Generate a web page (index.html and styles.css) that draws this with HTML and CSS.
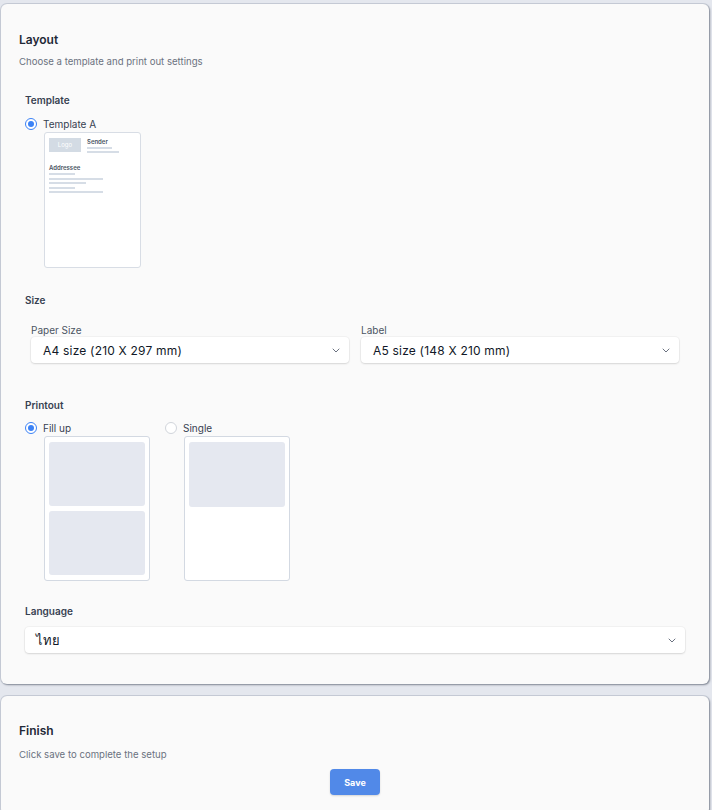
FILE: index.html
```html
<!DOCTYPE html>
<html lang="en">
<head>
<meta charset="UTF-8" />
<meta name="viewport" content="width=device-width, initial-scale=1" />
<title>Setup</title>
<link rel="stylesheet" href="styles.css">
</head>
<body>

<div class="card" id="layoutCard">
  <h2 class="cardTitle">Layout</h2>
  <p class="cardSub">Choose a template and print out settings</p>

  <div class="section sectionTemplate">
    <div class="sectionLabel">Template</div>
    <label class="radioRow">
      <span class="radio checked"></span>
      Template A
    </label>
    <div class="templatePreview">
      <div class="tplHead">
        <div class="tplLogo">Logo</div>
        <div class="tplSender">
          <div class="tplText">Sender</div>
          <div class="tplLine w25"></div>
          <div class="tplLine w32"></div>
        </div>
      </div>
      <div class="tplText tplAddr">Addressee</div>
      <div class="tplLines">
        <div class="tplLine w26"></div>
        <div class="tplLine w54"></div>
        <div class="tplLine w37"></div>
        <div class="tplLine w26"></div>
        <div class="tplLine w54"></div>
      </div>
    </div>
  </div>

  <div class="section sectionSize">
    <div class="sectionLabel">Size</div>
    <div class="sizeGrid">
      <div class="field">
        <div class="fieldLabel">Paper Size</div>
        <div class="select">
          <span>A4 size (210 X 297 mm)</span>
          <svg class="chevron" width="8" height="5" viewBox="0 0 8 5"><path d="M1 1l3 3 3-3" fill="none" stroke="#6b7280" stroke-width="1" stroke-linecap="round" stroke-linejoin="round"/></svg>
        </div>
      </div>
      <div class="field">
        <div class="fieldLabel">Label</div>
        <div class="select">
          <span>A5 size (148 X 210 mm)</span>
          <svg class="chevron" width="8" height="5" viewBox="0 0 8 5"><path d="M1 1l3 3 3-3" fill="none" stroke="#6b7280" stroke-width="1" stroke-linecap="round" stroke-linejoin="round"/></svg>
        </div>
      </div>
    </div>
  </div>

  <div class="section sectionPrintout">
    <div class="sectionLabel">Printout</div>
    <div class="printOptions">
      <div class="printOption">
        <label class="radioRow">
          <span class="radio checked"></span>
          Fill up
        </label>
        <div class="sheet">
          <div class="sheetBlock"></div>
          <div class="sheetBlock"></div>
        </div>
      </div>
      <div class="printOption">
        <label class="radioRow">
          <span class="radio"></span>
          Single
        </label>
        <div class="sheet">
          <div class="sheetBlock"></div>
        </div>
      </div>
    </div>
  </div>

  <div class="section sectionLang">
    <div class="sectionLabel">Language</div>
    <div class="select langSelect">
      <span>ไทย</span>
      <svg class="chevron" width="8" height="5" viewBox="0 0 8 5"><path d="M1 1l3 3 3-3" fill="none" stroke="#6b7280" stroke-width="1" stroke-linecap="round" stroke-linejoin="round"/></svg>
    </div>
  </div>
</div>

<div class="card" id="finishCard">
  <h2 class="cardTitle">Finish</h2>
  <p class="cardSub">Click save to complete the setup</p>
  <div class="actions">
    <button class="saveBtn">Save</button>
  </div>
</div>

</body>
</html>
```

FILE: styles.css
```css
body {
  margin: 0;
  padding: 4px 3px 0 1px;
  background: #e4e7ee;
  font-family: Inter, "Noto Sans", "DejaVu Sans", sans-serif;
  color: #1f2937;
}

.card {
  background: #fafafa;
  border-radius: 6px;
  box-shadow: 0 0 0 1px rgba(120,130,150,0.25), 1px 1px 2px rgba(60,66,80,0.55);
  padding: 28px 18px 31px 18px;
}
#finishCard {
  margin-top: 12px;
  padding-top: 27px;
  padding-bottom: 20px;
}

.cardTitle {
  margin: 0;
  font-size: 12px;
  line-height: 16px;
  font-weight: 600;
  color: #1f2937;
}
.cardSub {
  margin: 8px 0 0;
  font-size: 9.6px;
  line-height: 12px;
  color: #6b7280;
}
#finishCard .cardSub { margin-top: 10px; }

.section {
  padding: 0 6px;
}
.sectionLabel {
  font-size: 10px;
  line-height: 14px;
  font-weight: 600;
  color: #374151;
}
.sectionTemplate { margin-top: 25px; }
.sectionSize { margin-top: 25px; }
.sectionPrintout { margin-top: 35px; }
.sectionLang { margin-top: 23px; }

/* radios */
.radioRow {
  display: flex;
  align-items: center;
  gap: 6px;
  height: 14px;
  font-size: 10px;
  color: #374151;
}
.radio {
  box-sizing: border-box;
  width: 12px;
  height: 12px;
  border-radius: 50%;
  border: 1px solid #d1d5db;
  background: #fff;
  display: flex;
  align-items: center;
  justify-content: center;
}
.radio.checked {
  border: 1.5px solid #3b82f6;
}
.radio.checked::after {
  content: "";
  width: 6px;
  height: 6px;
  border-radius: 50%;
  background: #3b82f6;
}
.sectionTemplate .radioRow { margin-top: 10px; }

/* template preview */
.templatePreview {
  box-sizing: border-box;
  width: 97px;
  height: 136px;
  margin: 1px 0 0 19px;
  background: #fff;
  border: 1px solid #d8dde5;
  border-radius: 3px;
  padding: 5px 4px;
}
.tplHead {
  display: flex;
  gap: 6px;
}
.tplLogo {
  width: 32px;
  height: 14px;
  background: #d3dbe4;
  color: #fff;
  font-size: 6px;
  line-height: 14px;
  text-align: center;
}
.tplSender {
  display: flex;
  flex-direction: column;
  gap: 2px;
}
.tplText {
  font-size: 6px;
  line-height: 7px;
  font-weight: 600;
  color: #4b5563;
}
.tplAddr { margin-top: 11px; }
.tplLines {
  display: flex;
  flex-direction: column;
  gap: 2.5px;
  margin-top: 2px;
}
.tplLine {
  height: 2px;
  background: #d6dde6;
}
.w25 { width: 25px; }
.w26 { width: 26px; }
.w32 { width: 32px; }
.w37 { width: 37px; }
.w54 { width: 54px; }

/* size */
.sizeGrid {
  display: grid;
  grid-template-columns: 1fr 1fr;
  gap: 12px;
  padding: 0 6px;
  margin-top: 17px;
}
.fieldLabel {
  font-size: 10px;
  line-height: 12px;
  color: #4b5563;
  margin-bottom: 1px;
}
.select {
  box-sizing: border-box;
  height: 26px;
  background: #fff;
  border-radius: 4px;
  box-shadow: 0 1px 2px rgba(0,0,0,0.12), 0 0 0 1px rgba(0,0,0,0.03);
  display: flex;
  align-items: center;
  justify-content: space-between;
  padding: 0 9px 0 12px;
  font-size: 12px;
  letter-spacing: 0.2px;
  color: #111827;
}
.langSelect {
  margin-top: 9px;
  padding-left: 11px;
  font-size: 13px;
}

/* printout */
.printOptions {
  display: flex;
  gap: 15px;
  margin-top: 9px;
}
.sheet {
  box-sizing: border-box;
  width: 106px;
  height: 145px;
  margin: 1px 0 0 19px;
  background: #fff;
  border: 1px solid #d3d9e2;
  border-radius: 3px;
  padding: 5px 4px;
  display: flex;
  flex-direction: column;
  gap: 5px;
}
.sheetBlock {
  height: 65px;
  background: #e5e8f0;
  border-radius: 3px;
}

/* finish */
.actions {
  display: flex;
  justify-content: center;
  margin-top: 8px;
}
.saveBtn {
  width: 50px;
  height: 26px;
  border: none;
  border-radius: 4px;
  background: #5189e8;
  color: #fff;
  font-family: inherit;
  font-size: 9px;
  font-weight: 700;
  cursor: pointer;
  box-shadow: 0 1px 2px rgba(0,0,0,0.15);
}
```
